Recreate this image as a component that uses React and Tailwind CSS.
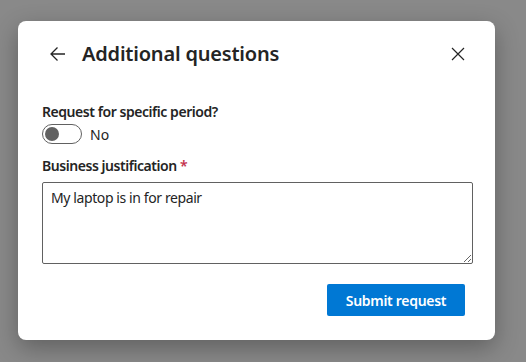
import React, { useState } from "react";

const font = { fontFamily: '"Noto Sans", "Open Sans", "Liberation Sans", sans-serif' };

const App = () => {
    const [specific, setSpecific] = useState(false);
    const [text, setText] = useState("My laptop is in for repair");

    return (
        <div className="w-[526px] h-[362px] bg-[#898989] pt-[21px] pl-[18px] overflow-hidden" style={font}>
            <div className="w-[477px] h-[319px] bg-white rounded-[8px] shadow-[0_8px_24px_rgba(0,0,0,0.3)] px-[24px] pt-[17px]">
                {/* header */}
                <div className="flex items-center h-[32px] -mr-[3px]">
                    <button className="w-[32px] h-[32px] flex items-center justify-center text-[#242424]">
                        <svg width="18" height="18" viewBox="0 0 18 18" fill="none" stroke="currentColor" strokeWidth="1.3">
                            <path d="M16 9H2.5M8.5 2.5L2 9l6.5 6.5" />
                        </svg>
                    </button>
                    <h2 className="ml-[8px] text-[20px] font-semibold text-[#242424] leading-[28px] tracking-[-0.2px]">Additional questions</h2>
                    <button className="ml-auto w-[32px] h-[32px] flex items-center justify-center text-[#242424]">
                        <svg width="14" height="14" viewBox="0 0 14 14" fill="none" stroke="currentColor" strokeWidth="1.2">
                            <path d="M1 1l12 12M13 1L1 13" />
                        </svg>
                    </button>
                </div>

                {/* toggle field */}
                <div className="mt-[32px] text-[14px] font-semibold text-[#242424] leading-[20px] tracking-[-0.45px]">Request for specific period?</div>
                <div className="flex items-center mt-[2px] h-[20px]">
                    <button
                        onClick={() => setSpecific(!specific)}
                        className="w-[40px] h-[20px] rounded-full border border-[#616161] flex items-center px-[2px]"
                    >
                        <span className="w-[14px] h-[14px] rounded-full bg-[#616161]" />
                    </button>
                    <span className="ml-[8px] text-[14px] text-[#242424]">{specific ? "Yes" : "No"}</span>
                </div>

                {/* justification */}
                <div className="mt-[12px] text-[14px] font-semibold text-[#242424] leading-[20px] tracking-[-0.45px]">
                    Business justification <span className="text-[#c4314b]">*</span>
                </div>
                <textarea
                    value={text}
                    onChange={(e) => setText(e.target.value)}
                    className="mt-[6px] w-[431px] h-[82px] block border border-[#616161] rounded-[2px] px-[8px] py-[5px] text-[14px] text-[#242424] leading-[20px] tracking-[-0.4px] outline-none"
                    style={font}
                />

                <div className="flex justify-end mt-[20px] pr-[6px]">
                    <button className="w-[138px] h-[32px] bg-[#0078d4] rounded-[2px] text-white text-[14px] font-semibold tracking-[-0.3px]">
                        Submit request
                    </button>
                </div>
            </div>
        </div>
    );
};

export default App;
